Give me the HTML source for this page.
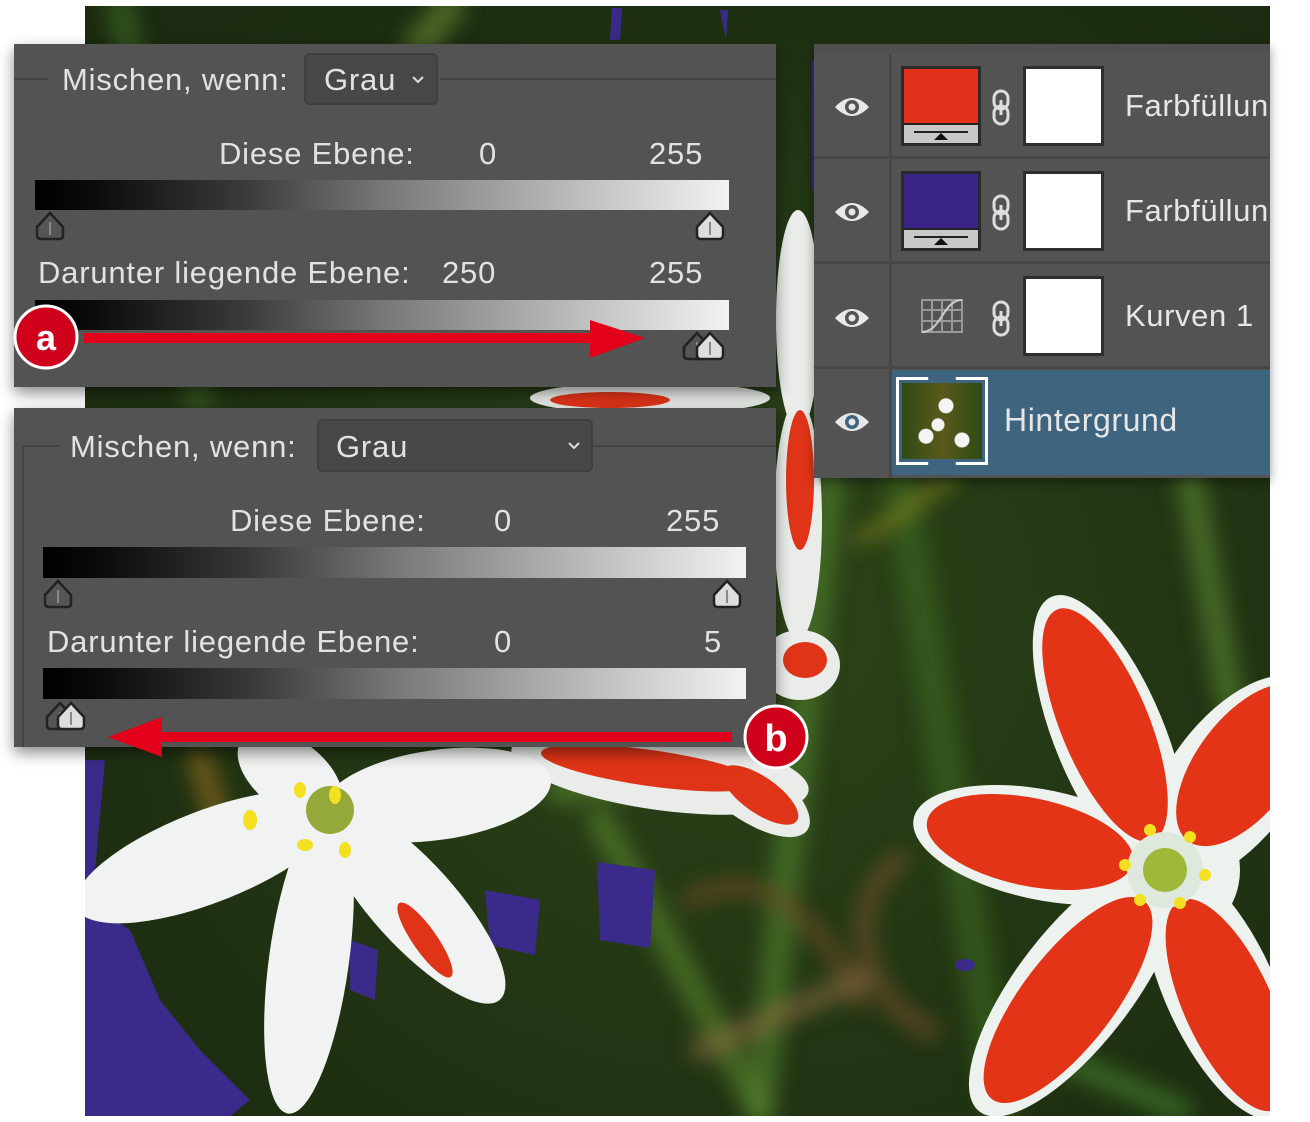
<!DOCTYPE html>
<html><head><meta charset="utf-8"><style>
*{margin:0;padding:0;box-sizing:border-box}
body{width:1310px;height:1122px;background:#fff;position:relative;overflow:hidden;font-family:"Liberation Sans",sans-serif}
.abs{position:absolute}
.panel{position:absolute;background:#535353;box-shadow:0 6px 14px rgba(0,0,0,.45)}
.t{position:absolute;color:#e2e2e2;font-size:31px;letter-spacing:.8px;white-space:nowrap;line-height:1}
.bar{position:absolute;background:linear-gradient(90deg,#000 0%,#0a0a0a 8%,#3a3a3a 30%,#777 50%,#b5b5b5 75%,#f2f2f2 100%)}
.dd{position:absolute;background:#474747;border:2px solid #3f3f3f;border-radius:5px}
.line{position:absolute;height:2px;background:#444}
.row{position:absolute;left:0;width:456px;height:105px;border-bottom:3px solid #474747}
.lt{position:absolute;left:311px;top:34px;color:#e6e6e6;font-size:31px;letter-spacing:.6px;white-space:nowrap}
.mask{position:absolute;left:209px;top:12px;width:81px;height:80px;background:#fff;border:3px solid #2e2e2e}
.ct{position:absolute;left:87px;top:12px;width:80px;height:80px;border:3px solid #2a2a2a}
</style></head><body>

<svg class="abs" style="left:85px;top:6px" width="1185" height="1110" viewBox="85 6 1185 1110">
<defs>
<radialGradient id="bg" cx="55%" cy="55%" r="70%"><stop offset="0" stop-color="#2c4419"/><stop offset="1" stop-color="#1b2a10"/></radialGradient>
<filter id="bl"><feGaussianBlur stdDeviation="10"/></filter>
</defs>
<rect x="85" y="6" width="1185" height="1110" fill="url(#bg)"/>
<g stroke-linecap="round" fill="none" filter="url(#bl)">
<path d="M830 480 L760 1110" stroke="#4d7a2a" stroke-width="30" opacity=".7"/>
<path d="M900 480 L1000 1110" stroke="#3a6a22" stroke-width="34" opacity=".6"/>
<path d="M1190 480 L1230 700" stroke="#5a8a30" stroke-width="28" opacity=".6"/>
<path d="M600 820 L760 1110" stroke="#5c8a2e" stroke-width="26" opacity=".6"/>
<path d="M120 6 L200 400" stroke="#3c6a25" stroke-width="30" opacity=".6"/>
<path d="M450 6 L420 44" stroke="#6a8a30" stroke-width="30" opacity=".6"/>
<path d="M860 540 L950 480" stroke="#8a8a20" stroke-width="12" opacity=".7"/>
<path d="M560 790 L760 760" stroke="#5a8a2e" stroke-width="30" opacity=".6"/>
<path d="M690 900 C760 860 820 920 860 1000" stroke="#6a4a25" stroke-width="18" opacity=".7"/>
<path d="M900 860 C840 900 860 1000 930 1030" stroke="#6b4d2a" stroke-width="20" opacity=".7"/>
<path d="M700 1050 L860 980" stroke="#8a6a40" stroke-width="22" opacity=".6"/>
<path d="M1040 1050 L1180 1110" stroke="#3e7a28" stroke-width="24" opacity=".7"/>
<path d="M200 760 L230 860" stroke="#8a6a20" stroke-width="24" opacity=".7"/>
</g>
<g fill="#3a2a8a">
<path d="M85 900 L130 930 L160 1000 L200 1050 L250 1100 L230 1116 L85 1116Z"/>
<path d="M85 760 L105 760 L95 870 L85 880Z"/>
<path d="M350 940 L378 950 L375 1000 L350 990Z"/>
<path d="M485 890 L540 900 L535 955 L490 945Z"/>
<path d="M597 862 L655 870 L650 948 L600 940Z"/>
<path d="M612 8 L622 8 L620 40 L610 40Z"/>
<path d="M720 10 L728 10 L726 40Z"/>
<path d="M812 60 L830 70 L830 200 L812 190Z"/>
<ellipse cx="965" cy="965" rx="10" ry="6"/>
</g>
<!-- mid white/red petals -->
<g fill="#e9ece8">
<ellipse cx="798" cy="320" rx="22" ry="110"/>
<ellipse cx="798" cy="520" rx="24" ry="120"/>
<ellipse cx="650" cy="398" rx="120" ry="16"/>
<ellipse cx="800" cy="665" rx="40" ry="35"/>
<ellipse cx="660" cy="770" rx="150" ry="40" transform="rotate(8 660 770)"/>
<ellipse cx="750" cy="790" rx="70" ry="30" transform="rotate(35 750 790)"/>
</g>
<g fill="#e03418">
<ellipse cx="800" cy="480" rx="14" ry="70"/>
<ellipse cx="610" cy="400" rx="60" ry="8"/>
<ellipse cx="805" cy="660" rx="22" ry="18"/>
<ellipse cx="650" cy="768" rx="110" ry="18" transform="rotate(8 650 768)"/>
<ellipse cx="760" cy="795" rx="45" ry="18" transform="rotate(35 760 795)"/>
</g>
<!-- white flower -->
<g fill="#f0f3f1">
<ellipse cx="207" cy="857" rx="140" ry="46" transform="rotate(158.8 207 857)"/>
<ellipse cx="309" cy="960" rx="155" ry="40" transform="rotate(97.8 309 960)"/>
<ellipse cx="413" cy="903" rx="130" ry="42" transform="rotate(48 413 903)"/>
<ellipse cx="437" cy="795" rx="115" ry="45" transform="rotate(-8 437 795)"/>
<ellipse cx="290" cy="775" rx="60" ry="35" transform="rotate(-143 290 775)"/>
</g>
<ellipse cx="425" cy="940" rx="45" ry="12" fill="#e03418" transform="rotate(55 425 940)"/>
<circle cx="330" cy="810" r="24" fill="#93a93a"/>
<g fill="#f3e020"><ellipse cx="250" cy="820" rx="7" ry="10"/><ellipse cx="300" cy="790" rx="6" ry="8"/><ellipse cx="305" cy="845" rx="8" ry="6"/><ellipse cx="345" cy="850" rx="6" ry="8"/><ellipse cx="335" cy="795" rx="6" ry="9"/></g>
<!-- red flower -->
<g fill="#eef2ee">
<ellipse cx="1110" cy="737" rx="152" ry="55" transform="rotate(-112.5 1110 737)"/>
<ellipse cx="1043" cy="845" rx="132" ry="55" transform="rotate(-168.4 1043 845)"/>
<ellipse cx="1075" cy="987" rx="157" ry="58" transform="rotate(127.5 1075 987)"/>
<ellipse cx="1220" cy="990" rx="140" ry="55" transform="rotate(65.4 1220 990)"/>
<ellipse cx="1232" cy="780" rx="122" ry="62" transform="rotate(-53 1232 780)"/>
<circle cx="1165" cy="870" r="75"/>
</g>
<g fill="#e33418">
<ellipse cx="1105" cy="725" rx="125" ry="44" transform="rotate(-112.5 1105 725)"/>
<ellipse cx="1030" cy="842" rx="105" ry="44" transform="rotate(-168.4 1030 842)"/>
<ellipse cx="1068" cy="1000" rx="125" ry="46" transform="rotate(127.5 1068 1000)"/>
<ellipse cx="1228" cy="1005" rx="115" ry="44" transform="rotate(65.4 1228 1005)"/>
<ellipse cx="1245" cy="765" rx="95" ry="48" transform="rotate(-53 1245 765)"/>
</g>
<circle cx="1165" cy="870" r="38" fill="#dfe8dc"/>
<circle cx="1165" cy="870" r="22" fill="#9fb83a"/>
<g fill="#f3e020"><circle cx="1150" cy="830" r="6"/><circle cx="1190" cy="837" r="6"/><circle cx="1125" cy="865" r="6"/><circle cx="1205" cy="875" r="6"/><circle cx="1140" cy="900" r="6"/><circle cx="1180" cy="903" r="6"/></g>
</svg>

<!-- Top panel -->
<div class="panel" style="left:14px;top:44px;width:762px;height:343px">
  <div class="line" style="left:0;top:34px;width:34px"></div>
  <div class="line" style="left:426px;top:34px;width:336px"></div>
  <div class="t" style="left:48px;top:20px">Mischen, wenn:</div>
  <div class="dd" style="left:290px;top:9px;width:134px;height:52px"></div>
  <div class="t" style="left:310px;top:20px">Grau</div>
  <svg class="abs" style="left:397px;top:31px" width="14" height="10"><path d="M2 2 L7 7 L12 2" stroke="#ddd" stroke-width="2" fill="none"/></svg>
  <div class="t" style="left:205px;top:94px">Diese Ebene:</div>
  <div class="t" style="left:465px;top:94px">0</div>
  <div class="t" style="left:635px;top:94px">255</div>
  <div class="bar" style="left:21px;top:136px;width:694px;height:30px"></div>
  <div class="t" style="left:24px;top:213px">Darunter liegende Ebene:</div>
  <div class="t" style="left:428px;top:213px">250</div>
  <div class="t" style="left:635px;top:213px">255</div>
  <div class="bar" style="left:21px;top:256px;width:694px;height:30px"></div>
</div>

<!-- Bottom panel -->
<div class="panel" style="left:14px;top:408px;width:762px;height:339px">
  <div class="line" style="left:8px;top:37px;width:38px"></div>
  <div class="abs" style="left:8px;top:37px;width:2px;height:302px;background:#444"></div>
  <div class="line" style="left:580px;top:37px;width:182px"></div>
  <div class="t" style="left:56px;top:23px">Mischen, wenn:</div>
  <div class="dd" style="left:303px;top:11px;width:276px;height:53px"></div>
  <div class="t" style="left:322px;top:23px">Grau</div>
  <svg class="abs" style="left:553px;top:33px" width="14" height="10"><path d="M2 2 L7 7 L12 2" stroke="#ddd" stroke-width="2" fill="none"/></svg>
  <div class="t" style="left:216px;top:97px">Diese Ebene:</div>
  <div class="t" style="left:480px;top:97px">0</div>
  <div class="t" style="left:652px;top:97px">255</div>
  <div class="bar" style="left:29px;top:139px;width:703px;height:31px"></div>
  <div class="t" style="left:33px;top:218px">Darunter liegende Ebene:</div>
  <div class="t" style="left:480px;top:218px">0</div>
  <div class="t" style="left:690px;top:218px">5</div>
  <div class="bar" style="left:29px;top:260px;width:703px;height:31px"></div>
</div>
<svg class="abs" style="left:0;top:0" width="1310" height="1122">
<defs>
<g id="sl"><path d="M0 -14 L-13 0 L-13 8 Q-13 12 -9 12 L9 12 Q13 12 13 8 L13 0 Z" stroke="#222" stroke-width="2.5"/><line x1="0" y1="-5" x2="0" y2="8" stroke="#888" stroke-width="2"/></g>
</defs>
<use href="#sl" x="50" y="227" fill="#555"/>
<use href="#sl" x="710" y="227" fill="#ddd"/>
<use href="#sl" x="697" y="347" fill="#555"/>
<use href="#sl" x="710" y="347" fill="#ddd"/>
<use href="#sl" x="58" y="595" fill="#555"/>
<use href="#sl" x="727" y="595" fill="#ddd"/>
<use href="#sl" x="60" y="717" fill="#555"/>
<use href="#sl" x="71" y="717" fill="#ddd"/>
<rect x="84" y="333" width="515" height="10" fill="#e2001a"/>
<path d="M590 320 L645 338 L590 358Z" fill="#e2001a"/>
<rect x="160" y="732" width="572" height="10" fill="#e2001a"/>
<path d="M162 717 L108 737 L162 757Z" fill="#e2001a"/>
<circle cx="46" cy="337" r="31" fill="#d0021b" stroke="#fff" stroke-width="3"/>
<text x="46" y="350" font-family="Liberation Sans" font-weight="bold" font-size="36" fill="#fff" text-anchor="middle">a</text>
<circle cx="776" cy="737" r="31" fill="#d0021b" stroke="#fff" stroke-width="3"/>
<text x="776" y="751" font-family="Liberation Sans" font-weight="bold" font-size="38" fill="#fff" text-anchor="middle">b</text>
</svg>

<!-- Layers panel -->
<div class="panel" style="left:814px;top:44px;width:456px;height:434px;box-shadow:0 4px 10px rgba(0,0,0,.4)">
  <div class="abs" style="left:0;top:0;width:456px;height:10px;background:#505050"></div>
  <div class="abs" style="left:75px;top:10px;width:3px;height:424px;background:#474747"></div>
  <div class="row" style="top:10px">
    <div class="ct" style="background:#e3301a"><div class="abs" style="left:0;bottom:0;width:74px;height:20px;background:#c8c8c8;border-top:2px solid #222"></div><div class="abs" style="left:10px;bottom:10px;width:54px;height:2px;background:#222"></div><div class="abs" style="left:30px;bottom:3px;width:0;height:0;border-left:7px solid transparent;border-right:7px solid transparent;border-bottom:7px solid #111"></div></div>
    <div class="mask"></div><div class="lt">Farbfüllun</div>
  </div>
  <div class="row" style="top:115px">
    <div class="ct" style="background:#3a2386"><div class="abs" style="left:0;bottom:0;width:74px;height:20px;background:#c8c8c8;border-top:2px solid #222"></div><div class="abs" style="left:10px;bottom:10px;width:54px;height:2px;background:#222"></div><div class="abs" style="left:30px;bottom:3px;width:0;height:0;border-left:7px solid transparent;border-right:7px solid transparent;border-bottom:7px solid #111"></div></div>
    <div class="mask"></div><div class="lt">Farbfüllun</div>
  </div>
  <div class="row" style="top:220px">
    <svg class="abs" style="left:107px;top:35px" width="42" height="34"><g stroke="#999" stroke-width="2" fill="none"><rect x="1" y="1" width="40" height="32"/><line x1="11" y1="1" x2="11" y2="33"/><line x1="21" y1="1" x2="21" y2="33"/><line x1="31" y1="1" x2="31" y2="33"/><line x1="1" y1="11" x2="41" y2="11"/><line x1="1" y1="22" x2="41" y2="22"/><path d="M1 33 C20 33 22 1 41 1" stroke="#ccc"/></g></svg>
    <div class="mask"></div><div class="lt">Kurven 1</div>
  </div>
  <div class="row" style="top:326px;background:#3e6480;left:78px;width:378px;border:none">
    <div class="abs" style="left:4px;top:7px;width:92px;height:88px;border:3px solid #fff;clip-path:polygon(0 0,35% 0,35% 6%,65% 6%,65% 0,100% 0,100% 100%,65% 100%,65% 94%,35% 94%,35% 100%,0 100%)"></div>
    <div class="abs" style="left:10px;top:13px;width:80px;height:76px;background:radial-gradient(circle at 55% 30%,#f4f4f4 0 7px,transparent 8px),radial-gradient(circle at 30% 70%,#f4f4f4 0 7px,transparent 8px),radial-gradient(circle at 75% 75%,#f4f4f4 0 7px,transparent 8px),radial-gradient(circle at 45% 55%,#f4f4f4 0 6px,transparent 7px),linear-gradient(90deg,#2f4a16,#5a5a1a,#2d4a14)"></div>
    <div class="lt" style="left:112px;top:32px;font-size:32px">Hintergrund</div>
  </div>
</div>
<svg class="abs" style="left:0;top:0" width="1310" height="1122">
<g>
<g transform="translate(852,107)"><path d="M-17 0 Q0 -18 17 0 Q0 18 -17 0Z" fill="#e8e8e8"/><circle r="7" fill="#535353"/><circle r="3.5" fill="#e8e8e8"/></g>
<g transform="translate(852,212)"><path d="M-17 0 Q0 -18 17 0 Q0 18 -17 0Z" fill="#e8e8e8"/><circle r="7" fill="#535353"/><circle r="3.5" fill="#e8e8e8"/></g>
<g transform="translate(852,318)"><path d="M-17 0 Q0 -18 17 0 Q0 18 -17 0Z" fill="#e8e8e8"/><circle r="7" fill="#535353"/><circle r="3.5" fill="#e8e8e8"/></g>
<g transform="translate(852,422)"><path d="M-17 0 Q0 -18 17 0 Q0 18 -17 0Z" fill="#e8e8e8"/><circle r="7" fill="#3e6480"/><circle r="3.5" fill="#e8e8e8"/></g>
</g>
<g stroke="#ddd" stroke-width="3" fill="none">
<rect x="994" y="91" width="14" height="18" rx="7"/><rect x="994" y="106" width="14" height="18" rx="7"/><line x1="1001" y1="100" x2="1001" y2="115"/>
<rect x="994" y="196" width="14" height="18" rx="7"/><rect x="994" y="211" width="14" height="18" rx="7"/><line x1="1001" y1="205" x2="1001" y2="220"/>
<rect x="994" y="302" width="14" height="18" rx="7"/><rect x="994" y="317" width="14" height="18" rx="7"/><line x1="1001" y1="311" x2="1001" y2="326"/>
</g>
</svg>
</body></html>
